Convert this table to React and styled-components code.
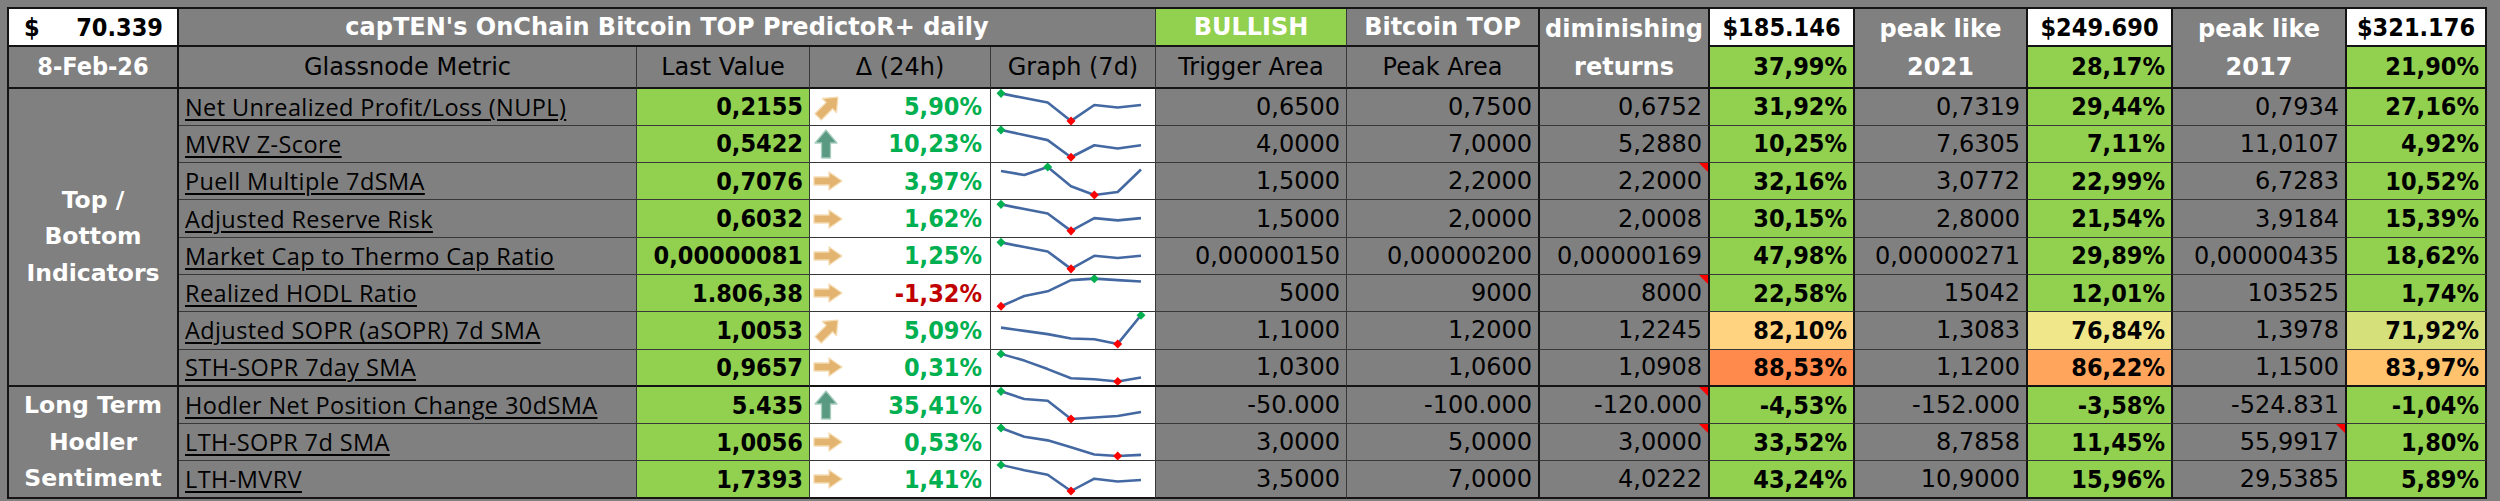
import React from 'react';
import styled, { createGlobalStyle } from 'styled-components';

const GlobalStyle = createGlobalStyle`
  html, body { margin: 0; padding: 0; background: #808080; }
  body { font-family: "DejaVu Sans", "Liberation Sans", sans-serif; }
`;

const COLS = [170, 458, 173, 181, 165, 191, 193, 170, 145, 173, 145, 174, 140];
const RIGHT = [2, 1, 1, 1, 1, 1, 2, 2, 2, 2, 2, 2, 2];
const line = (w) => (w > 1 ? `${w}px solid #141414` : `1px solid #383838`);

const GREEN = '#92D050';
const BOLD_NUM = `"DejaVu Sans Condensed", "DejaVu Sans", sans-serif`;

const Sheet = styled.div`
  display: grid;
  grid-template-columns: ${COLS.map((c) => `${c}px`).join(' ')};
  grid-template-rows: 38px 41.5px repeat(11, 37.3px);
  width: max-content;
  margin: 7px 0 0 7px;
  border-top: 2px solid #141414;
  border-left: 2px solid #141414;
  background: #808080;
`;

const Cell = styled.div`
  box-sizing: border-box;
  position: relative;
  display: flex;
  align-items: center;
  justify-content: flex-end;
  min-width: 0;
  padding: 0 6px;
  white-space: nowrap;
  border-right: ${(p) => line(p.$br ?? 1)};
  border-bottom: ${(p) => line(p.$bb ?? 1)};
  background: ${(p) => p.$bg || '#808080'};
  color: #000;
  font-family: "DejaVu Sans", "Liberation Sans", sans-serif;
  font-size: 24px;
`;

const PriceCell = styled(Cell)`
  background: #fff;
  justify-content: space-between;
  padding: 0 14px 0 15px;
  font-family: ${BOLD_NUM};
  font-weight: 700;
  font-size: 25px;
`;

const TitleCell = styled(Cell)`
  grid-column: span 4;
  justify-content: center;
  color: #fff;
  font-weight: 700;
  font-size: 24px;
`;

const SignalCell = styled(Cell)`
  background: ${GREEN};
  justify-content: center;
  color: #fff;
  font-weight: 700;
  font-size: 24px;
`;

const HeadBold = styled(Cell)`
  justify-content: center;
  color: #fff;
  font-weight: 700;
  font-size: 24px;
`;

const StackHead = styled(Cell)`
  grid-row: span 2;
  justify-content: center;
  text-align: center;
  white-space: normal;
  color: #fff;
  font-weight: 700;
  font-size: 24px;
  line-height: 38px;
`;

const TargetCell = styled(Cell)`
  background: #fff;
  justify-content: center;
  font-family: ${BOLD_NUM};
  font-weight: 700;
  font-size: 25px;
`;

const ColHead = styled(Cell)`
  justify-content: center;
  font-size: 24px;
`;

const DateCell = styled(Cell)`
  justify-content: center;
  color: #fff;
  font-family: ${BOLD_NUM};
  font-weight: 700;
  font-size: 25px;
`;

const LabelCell = styled(Cell)`
  grid-row: span ${(p) => p.$span};
  justify-content: center;
  text-align: center;
  white-space: normal;
  color: #fff;
  font-weight: 700;
  font-size: 23.5px;
  line-height: 36.5px;
`;

const MetricCell = styled(Cell)`
  justify-content: flex-start;
  padding-left: 6px;
  font-family: "Open Sans", "Noto Sans", sans-serif;
  font-size: 23.5px;
  letter-spacing: 0.4px;
`;

const MetricLink = styled.span`
  text-decoration: underline;
  text-decoration-thickness: 2px;
  text-underline-offset: 3px;
`;

const LastValueCell = styled(Cell)`
  background: ${GREEN};
  font-family: ${BOLD_NUM};
  font-weight: 700;
  font-size: 25px;
`;

const DeltaCell = styled(Cell)`
  background: #fff;
  justify-content: space-between;
  padding: 0 8px 0 3px;
`;

const DeltaValue = styled.span`
  color: ${(p) => (p.$neg ? '#C00000' : '#00B050')};
  font-family: ${BOLD_NUM};
  font-weight: 700;
  font-size: 25px;
`;

const GraphCell = styled(Cell)`
  background: #fff;
  padding: 0;
  align-items: stretch;
  justify-content: stretch;
`;

const NumCell = styled(Cell)`
  font-size: 24px;
`;

const PctCell = styled(Cell)`
  background: ${(p) => p.$bg || GREEN};
  font-family: ${BOLD_NUM};
  font-weight: 700;
  font-size: 25px;
`;

const CommentMark = styled.span`
  position: absolute;
  top: 0;
  right: 0;
  width: 0;
  height: 0;
  border-top: 9px solid #ff0000;
  border-left: 9px solid transparent;
`;

const ArrowIcon = ({ dir }) => {
  if (dir === 'right') {
    return (
      <svg width="30" height="20" viewBox="0 0 30 20">
        <path d="M1,6 H16 V1 L29,10 L16,19 V14 H1 Z" fill="#E3B470" stroke="#F4DBB2" strokeWidth="1.3" strokeLinejoin="round" />
      </svg>
    );
  }
  if (dir === 'up') {
    return (
      <svg width="26" height="30" viewBox="0 0 26 30">
        <path d="M13,1 L24,14 H17.5 V29 H8.5 V14 H2 Z" fill="#5A9A82" stroke="#A9CDBF" strokeWidth="1.3" strokeLinejoin="round" />
      </svg>
    );
  }
  return (
    <svg width="30" height="28" viewBox="0 0 30 28">
      <g transform="rotate(45 15 14)">
        <path d="M15,0 L25,12 H19.5 V28 H10.5 V12 H5 Z" fill="#E3B470" stroke="#F4DBB2" strokeWidth="1.3" strokeLinejoin="round" />
      </g>
    </svg>
  );
};

const Sparkline = ({ data, hi, lo }) => {
  const W = 164;
  const H = 36;
  const x0 = 10;
  const step = 140 / 6;
  const pts = data.map((v, i) => [x0 + i * step, v * H]);
  const diamond = ([x, y], color) => (
    <polygon points={`${x},${y - 4.5} ${x + 4.5},${y} ${x},${y + 4.5} ${x - 4.5},${y}`} fill={color} />
  );
  return (
    <svg width="100%" height="100%" viewBox={`0 0 ${W} ${H}`} preserveAspectRatio="none">
      <polyline points={pts.map((p) => p.join(',')).join(' ')} fill="none" stroke="#4468A2" strokeWidth="2.6" strokeLinejoin="round" />
      {diamond(pts[hi], '#00B050')}
      {diamond(pts[lo], '#FF0000')}
    </svg>
  );
};

const ROWS = [
  { name: 'Net Unrealized Profit/Loss (NUPL)', last: '0,2155', arrow: 'upright', delta: '5,90%', trig: '0,6500', peak: '0,7500', dim: '0,6752', p1: '31,92%', v21: '0,7319', p2: '29,44%', v17: '0,7934', p3: '27,16%', spark: [0.12, 0.25, 0.37, 0.88, 0.44, 0.51, 0.44], hi: 0, lo: 3 },
  { name: 'MVRV Z-Score', last: '0,5422', arrow: 'up', delta: '10,23%', trig: '4,0000', peak: '7,0000', dim: '5,2880', p1: '10,25%', v21: '7,6305', p2: '7,11%', v17: '11,0107', p3: '4,92%', spark: [0.11, 0.25, 0.39, 0.86, 0.53, 0.62, 0.53], hi: 0, lo: 3 },
  { name: 'Puell Multiple 7dSMA', last: '0,7076', arrow: 'right', delta: '3,97%', trig: '1,5000', peak: '2,2000', dim: '2,2000', dimNote: true, p1: '32,16%', v21: '3,0772', p2: '22,99%', v17: '6,7283', p3: '10,52%', spark: [0.22, 0.33, 0.11, 0.64, 0.88, 0.8, 0.18], hi: 2, lo: 4 },
  { name: 'Adjusted Reserve Risk', last: '0,6032', arrow: 'right', delta: '1,62%', trig: '1,5000', peak: '2,0000', dim: '2,0008', p1: '30,15%', v21: '2,8000', p2: '21,54%', v17: '3,9184', p3: '15,39%', spark: [0.12, 0.25, 0.37, 0.85, 0.5, 0.56, 0.5], hi: 0, lo: 3 },
  { name: 'Market Cap to Thermo Cap Ratio', last: '0,00000081', arrow: 'right', delta: '1,25%', trig: '0,00000150', peak: '0,00000200', dim: '0,00000169', p1: '47,98%', v21: '0,00000271', p2: '29,89%', v17: '0,00000435', p3: '18,62%', spark: [0.12, 0.25, 0.37, 0.85, 0.49, 0.55, 0.49], hi: 0, lo: 3 },
  { name: 'Realized HODL Ratio', last: '1.806,38', arrow: 'right', delta: '-1,32%', neg: true, trig: '5000', peak: '9000', dim: '8000', dimNote: true, p1: '22,58%', v21: '15042', p2: '12,01%', v17: '103525', p3: '1,74%', spark: [0.86, 0.58, 0.45, 0.14, 0.1, 0.14, 0.18], hi: 4, lo: 0 },
  { name: 'Adjusted SOPR (aSOPR) 7d SMA', last: '1,0053', arrow: 'upright', delta: '5,09%', trig: '1,1000', peak: '1,2000', dim: '1,2245', p1: '82,10%', c1: '#FFD37F', v21: '1,3083', p2: '76,84%', c2: '#F0E68A', v17: '1,3978', p3: '71,92%', c3: '#D6E07B', spark: [0.43, 0.52, 0.61, 0.73, 0.75, 0.88, 0.09], hi: 6, lo: 5 },
  { name: 'STH-SOPR 7day SMA', last: '0,9657', arrow: 'right', delta: '0,31%', trig: '1,0300', peak: '1,0600', dim: '1,0908', p1: '88,53%', c1: '#FF8A4B', v21: '1,1200', p2: '86,22%', c2: '#FFA55C', v17: '1,1500', p3: '83,97%', c3: '#FFC36E', spark: [0.11, 0.3, 0.54, 0.8, 0.83, 0.89, 0.78], hi: 0, lo: 5, sep: true },
  { name: 'Hodler Net Position Change 30dSMA', last: '5.435', arrow: 'up', delta: '35,41%', trig: '-50.000', peak: '-100.000', dim: '-120.000', dimNote: true, p1: '-4,53%', v21: '-152.000', p2: '-3,58%', v17: '-524.831', p3: '-1,04%', spark: [0.12, 0.33, 0.38, 0.88, 0.84, 0.8, 0.69], hi: 0, lo: 3 },
  { name: 'LTH-SOPR 7d SMA', last: '1,0056', arrow: 'right', delta: '0,53%', trig: '3,0000', peak: '5,0000', dim: '3,0000', dimNote: true, p1: '33,52%', v21: '8,7858', p2: '11,45%', v17: '55,9917', v17Note: true, p3: '1,80%', spark: [0.11, 0.35, 0.45, 0.64, 0.84, 0.88, 0.85], hi: 0, lo: 5 },
  { name: 'LTH-MVRV', last: '1,7393', arrow: 'right', delta: '1,41%', trig: '3,5000', peak: '7,0000', dim: '4,0222', p1: '43,24%', v21: '10,9000', p2: '15,96%', v17: '29,5385', p3: '5,89%', spark: [0.11, 0.26, 0.39, 0.85, 0.5, 0.58, 0.54], hi: 0, lo: 3, sep: true },
];

const DataRow = ({ r }) => {
  const bb = r.sep ? 2 : 1;
  return (
    <>
      <MetricCell $br={RIGHT[1]} $bb={bb}>
        <MetricLink>{r.name}</MetricLink>
      </MetricCell>
      <LastValueCell $br={RIGHT[2]} $bb={bb}>{r.last}</LastValueCell>
      <DeltaCell $br={RIGHT[3]} $bb={bb}>
        <ArrowIcon dir={r.arrow} />
        <DeltaValue $neg={r.neg}>{r.delta}</DeltaValue>
      </DeltaCell>
      <GraphCell $br={RIGHT[4]} $bb={bb}>
        <Sparkline data={r.spark} hi={r.hi} lo={r.lo} />
      </GraphCell>
      <NumCell $br={RIGHT[5]} $bb={bb}>{r.trig}</NumCell>
      <NumCell $br={RIGHT[6]} $bb={bb}>{r.peak}</NumCell>
      <NumCell $br={RIGHT[7]} $bb={bb}>
        {r.dim}
        {r.dimNote && <CommentMark />}
      </NumCell>
      <PctCell $br={RIGHT[8]} $bb={bb} $bg={r.c1}>{r.p1}</PctCell>
      <NumCell $br={RIGHT[9]} $bb={bb}>{r.v21}</NumCell>
      <PctCell $br={RIGHT[10]} $bb={bb} $bg={r.c2}>{r.p2}</PctCell>
      <NumCell $br={RIGHT[11]} $bb={bb}>
        {r.v17}
        {r.v17Note && <CommentMark />}
      </NumCell>
      <PctCell $br={RIGHT[12]} $bb={bb} $bg={r.c3}>{r.p3}</PctCell>
    </>
  );
};

export default function App() {
  return (
    <>
      <GlobalStyle />
      <Sheet>
        <PriceCell $br={2} $bb={2}>
          <span>$</span>
          <span>70.339</span>
        </PriceCell>
        <TitleCell $br={RIGHT[4]} $bb={2}>capTEN's OnChain Bitcoin TOP PredictoR+ daily</TitleCell>
        <SignalCell $br={RIGHT[5]} $bb={2}>BULLISH</SignalCell>
        <HeadBold $br={RIGHT[6]} $bb={2}>Bitcoin TOP</HeadBold>
        <StackHead $br={RIGHT[7]} $bb={2}>diminishing<br />returns</StackHead>
        <TargetCell $br={RIGHT[8]} $bb={2}>$185.146</TargetCell>
        <StackHead $br={RIGHT[9]} $bb={2}>peak like<br />2021</StackHead>
        <TargetCell $br={RIGHT[10]} $bb={2}>$249.690</TargetCell>
        <StackHead $br={RIGHT[11]} $bb={2}>peak like<br />2017</StackHead>
        <TargetCell $br={RIGHT[12]} $bb={2}>$321.176</TargetCell>

        <DateCell $br={2} $bb={2}>8-Feb-26</DateCell>
        <ColHead $br={RIGHT[1]} $bb={2}>Glassnode Metric</ColHead>
        <ColHead $br={RIGHT[2]} $bb={2}>Last Value</ColHead>
        <ColHead $br={RIGHT[3]} $bb={2}>Δ (24h)</ColHead>
        <ColHead $br={RIGHT[4]} $bb={2}>Graph (7d)</ColHead>
        <ColHead $br={RIGHT[5]} $bb={2}>Trigger Area</ColHead>
        <ColHead $br={RIGHT[6]} $bb={2}>Peak Area</ColHead>
        <PctCell $br={RIGHT[8]} $bb={2}>37,99%</PctCell>
        <PctCell $br={RIGHT[10]} $bb={2}>28,17%</PctCell>
        <PctCell $br={RIGHT[12]} $bb={2}>21,90%</PctCell>

        <LabelCell $span={8} $br={2} $bb={2}>Top /<br />Bottom<br />Indicators</LabelCell>
        {ROWS.slice(0, 8).map((r) => (
          <DataRow key={r.name} r={r} />
        ))}
        <LabelCell $span={3} $br={2} $bb={2}>Long Term<br />Hodler<br />Sentiment</LabelCell>
        {ROWS.slice(8).map((r) => (
          <DataRow key={r.name} r={r} />
        ))}
      </Sheet>
    </>
  );
}
